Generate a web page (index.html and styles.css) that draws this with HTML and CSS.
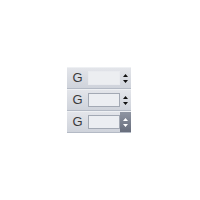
FILE: index.html
```html
<!DOCTYPE html>
<html>
<head>
<meta charset="utf-8">
<link rel="stylesheet" href="styles.css">
</head>
<body>
<div class="stack">
  <div class="row">
    <span class="label">G</span>
    <span class="field plain"></span>
    <span class="spin"><svg width="5" height="9" viewBox="0 0 5 9"><path d="M2.5 0 L5 3 H0 Z M2.5 9 L5 6 H0 Z" fill="#111"/></svg></span>
  </div>
  <div class="row">
    <span class="label">G</span>
    <span class="field"></span>
    <span class="spin"><svg width="5" height="9" viewBox="0 0 5 9"><path d="M2.5 0 L5 3 H0 Z M2.5 9 L5 6 H0 Z" fill="#111"/></svg></span>
  </div>
  <div class="row">
    <span class="label">G</span>
    <span class="field"></span>
    <span class="spin hot"><svg width="5" height="9" viewBox="0 0 5 9"><path d="M2.5 0 L5 3 H0 Z M2.5 9 L5 6 H0 Z" fill="#fff"/></svg></span>
  </div>
</div>
</body>
</html>
```

FILE: styles.css
```css
html, body {
  margin: 0;
  padding: 0;
  background: #fff;
}
body {
  width: 200px;
  height: 200px;
  display: flex;
  align-items: center;
  justify-content: center;
}
.stack {
  display: flex;
  flex-direction: column;
  margin-left: -2px;
}
.row {
  display: flex;
  align-items: center;
  width: 64px;
  height: 22px;
  box-sizing: border-box;
  background: linear-gradient(#e3e5ea, #cfd3db);
  border-top: 1px solid #eef0f3;
  border-bottom: 1px solid #b4bac5;
}
.label {
  width: 21px;
  text-align: center;
  font-family: "Liberation Sans", Arial, sans-serif;
  font-size: 13px;
  color: #3a3a3a;
  line-height: 14px;
}
.field {
  width: 32px;
  height: 14px;
  box-sizing: border-box;
  background: #eceef2;
  border: 1px solid #a3a9b4;
}
.field.plain {
  border-color: #e9ebef;
  background: #eceef1;
}
.spin {
  flex: 1;
  align-self: stretch;
  display: flex;
  align-items: center;
  justify-content: center;
}
.spin.hot {
  background: linear-gradient(#8f95a2, #676d7c);
}
```
